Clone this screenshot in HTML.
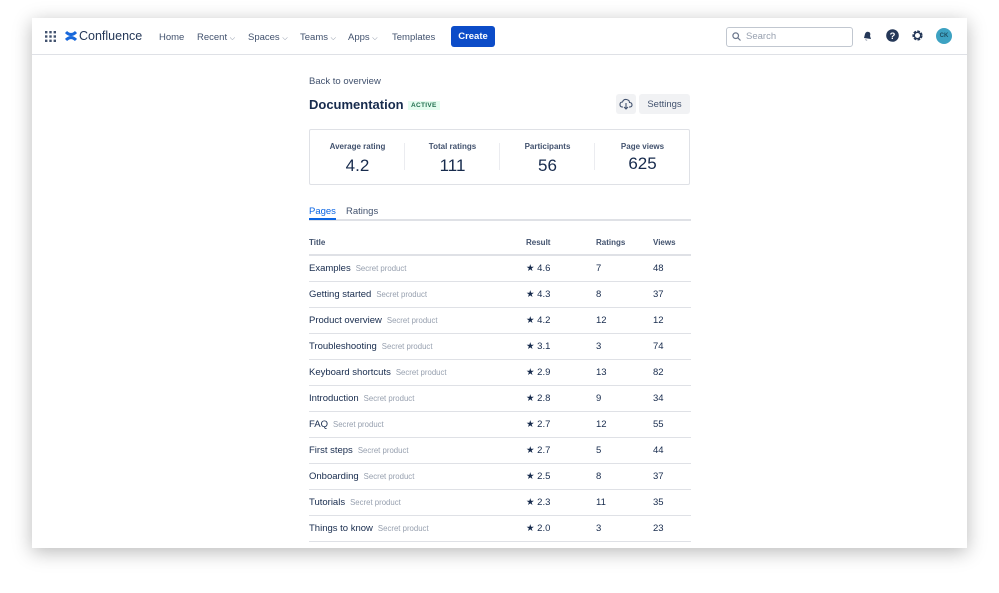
<!DOCTYPE html>
<html><head><meta charset="utf-8"><style>
body{margin:0;width:999px;height:593px;background:#fff;font-family:"Liberation Sans",sans-serif;color:#172b4d;position:relative;overflow:hidden}
.win{position:absolute;left:32px;top:18px;width:935px;height:530px;background:#fff;box-shadow:0 4px 18px rgba(0,0,0,.28);overflow:hidden}
.hdr{position:absolute;left:0;top:0;width:935px;height:36px;border-bottom:1px solid #dfe1e6}
.t{position:absolute;white-space:nowrap}
.nav{font-size:9.5px;color:#42526e;top:14px}
.chev{font-size:7px;color:#6b778c}
.c{position:absolute;text-align:center}
table{position:absolute;left:277px;top:218px;width:382px;border-collapse:collapse;font-size:9.5px}
th{font-size:8px;color:#42526e;text-align:left;font-weight:bold;height:12px;padding:0 0 6px 0;border-bottom:2px solid #dfe1e6}
td{height:25px;border-bottom:1px solid #dfe1e6;padding:0;color:#172b4d}
td small{color:#97a0af;font-size:7.8px;margin-left:5px}
</style></head><body>
<div class="win">
<div class="hdr">
<svg class="t" style="left:13px;top:13px" width="11" height="11" viewBox="0 0 11 11" fill="#42526e"><rect x="0" y="0" width="2.4" height="2.4"/><rect x="4.3" y="0" width="2.4" height="2.4"/><rect x="8.6" y="0" width="2.4" height="2.4"/><rect x="0" y="4.3" width="2.4" height="2.4"/><rect x="4.3" y="4.3" width="2.4" height="2.4"/><rect x="8.6" y="4.3" width="2.4" height="2.4"/><rect x="0" y="8.6" width="2.4" height="2.4"/><rect x="4.3" y="8.6" width="2.4" height="2.4"/><rect x="8.6" y="8.6" width="2.4" height="2.4"/></svg>
<svg class="t" style="left:33px;top:12px" width="12" height="12" viewBox="0 0 12 12"><path d="M1 2 Q6 7 11 2 M1 10 Q6 5 11 10" stroke="#1868db" stroke-width="3" fill="none"/></svg>
<div class="t" style="left:47px;top:11px;font-size:12.5px;color:#253858">Confluence</div>
<div class="t nav" style="left:127px">Home</div>
<div class="t nav" style="left:165px">Recent <span class="chev">⌵</span></div>
<div class="t nav" style="left:216px">Spaces <span class="chev">⌵</span></div>
<div class="t nav" style="left:268px">Teams <span class="chev">⌵</span></div>
<div class="t nav" style="left:316px">Apps <span class="chev">⌵</span></div>
<div class="t nav" style="left:360px">Templates</div>
<div class="t" style="left:419px;top:8px;width:44px;height:21px;background:#0c4cc8;border-radius:3px;color:#fff;font-size:9.5px;font-weight:bold;text-align:center;line-height:22px">Create</div>
<div class="t" style="left:694px;top:9px;width:125px;height:18px;border:1px solid #c1c7d0;border-radius:3px"></div>
<svg class="t" style="left:700px;top:14px" width="9" height="9" viewBox="0 0 9 9"><circle cx="3.7" cy="3.7" r="2.8" stroke="#6b778c" stroke-width="1.2" fill="none"/><path d="M5.8 5.8L8.5 8.5" stroke="#6b778c" stroke-width="1.2"/></svg>
<div class="t" style="left:714px;top:13px;font-size:9.5px;color:#97a0af">Search</div>
<svg class="t" style="left:830px;top:12px" width="11" height="11" viewBox="0 0 11 11"><path d="M2 8 L3 4 Q4 1 7 2 Q9 3 8 6 L9 9 Z M3 9.5 Q4 11 5.5 10" fill="#253858"/></svg>
<svg class="t" style="left:854px;top:11px" width="13" height="13" viewBox="0 0 13 13"><circle cx="6.5" cy="6.5" r="6.3" fill="#253858"/><text x="6.5" y="10" font-size="9.5" font-weight="bold" fill="#fff" text-anchor="middle" font-family="Liberation Sans">?</text></svg>
<svg class="t" style="left:879px;top:11px" width="13" height="13" viewBox="0 0 13 13"><circle cx="6.5" cy="6.5" r="4" stroke="#253858" stroke-width="2.2" fill="none" stroke-dasharray="2.5 1.2"/><circle cx="6.5" cy="6.5" r="3.2" stroke="#253858" stroke-width="1.4" fill="none"/></svg>
<div class="t" style="left:904px;top:10px;width:16px;height:16px;border-radius:50%;background:#3da2c2;color:#1d4f63;font-size:6px;font-weight:bold;text-align:center;line-height:16px">CK</div>
</div>

<div class="t" style="left:277px;top:58px;font-size:9.5px;color:#42526e">Back to overview</div>
<div class="t" style="left:277px;top:79px;font-size:13px;font-weight:bold;color:#172b4d">Documentation</div>
<div class="t" style="left:376px;top:83px;background:#e3fcef;color:#216e4e;font-size:6.5px;font-weight:bold;padding:1px 3px;letter-spacing:.3px">ACTIVE</div>
<div class="t" style="left:584px;top:76px;width:20px;height:20px;background:#f1f2f4;border-radius:3px"></div>
<svg class="t" style="left:587px;top:79px" width="14" height="14" viewBox="0 0 14 14"><path d="M4 10 H3.5 Q1 10 1 7.5 Q1 5 3.5 5 Q4.5 2 7.5 2.5 Q10.5 3 10.5 5.5 Q13 5.5 13 8 Q13 10 10.5 10 H10 M7 6 V12 M5 10 L7 12 L9 10" stroke="#42526e" stroke-width="1.1" fill="none"/></svg>
<div class="t" style="left:607px;top:76px;width:51px;height:20px;background:#f1f2f4;border-radius:3px;font-size:9.5px;color:#42526e;text-align:center;line-height:22px">Settings</div>

<div class="t" style="left:277px;top:111px;width:379px;height:54px;border:1.5px solid #dfe1e6;border-radius:2px"></div>
<div class="t" style="left:372px;top:125px;width:1px;height:27px;background:#ebecf0"></div>
<div class="t" style="left:467px;top:125px;width:1px;height:27px;background:#ebecf0"></div>
<div class="t" style="left:562px;top:125px;width:1px;height:27px;background:#ebecf0"></div>
<div class="c" style="left:278px;top:124px;width:95px;font-size:8px;font-weight:bold;color:#42526e">Average rating</div>
<div class="c" style="left:373px;top:124px;width:95px;font-size:8px;font-weight:bold;color:#42526e">Total ratings</div>
<div class="c" style="left:468px;top:124px;width:95px;font-size:8px;font-weight:bold;color:#42526e">Participants</div>
<div class="c" style="left:563px;top:124px;width:95px;font-size:8px;font-weight:bold;color:#42526e">Page views</div>
<div class="c" style="left:278px;top:138px;width:95px;font-size:17px;color:#172b4d">4.2</div>
<div class="c" style="left:373px;top:138px;width:95px;font-size:17px">111</div>
<div class="c" style="left:468px;top:138px;width:95px;font-size:17px">56</div>
<div class="c" style="left:563px;top:136px;width:95px;font-size:17px">625</div>

<div class="t" style="left:277px;top:188px;font-size:9.5px;color:#0c66e4">Pages</div>
<div class="t" style="left:314px;top:188px;font-size:9.5px;color:#42526e">Ratings</div>
<div class="t" style="left:277px;top:201px;width:382px;height:1.5px;background:#dfe1e6"></div>
<div class="t" style="left:277px;top:200px;width:27px;height:2px;background:#0c66e4"></div>

<table>
<tr><th style="width:217px">Title</th><th style="width:70px">Result</th><th style="width:57px">Ratings</th><th>Views</th></tr>
<tr><td>Examples<small>Secret product</small></td><td>★ 4.6</td><td>7</td><td>48</td></tr>
<tr><td>Getting started<small>Secret product</small></td><td>★ 4.3</td><td>8</td><td>37</td></tr>
<tr><td>Product overview<small>Secret product</small></td><td>★ 4.2</td><td>12</td><td>12</td></tr>
<tr><td>Troubleshooting<small>Secret product</small></td><td>★ 3.1</td><td>3</td><td>74</td></tr>
<tr><td>Keyboard shortcuts<small>Secret product</small></td><td>★ 2.9</td><td>13</td><td>82</td></tr>
<tr><td>Introduction<small>Secret product</small></td><td>★ 2.8</td><td>9</td><td>34</td></tr>
<tr><td>FAQ<small>Secret product</small></td><td>★ 2.7</td><td>12</td><td>55</td></tr>
<tr><td>First steps<small>Secret product</small></td><td>★ 2.7</td><td>5</td><td>44</td></tr>
<tr><td>Onboarding<small>Secret product</small></td><td>★ 2.5</td><td>8</td><td>37</td></tr>
<tr><td>Tutorials<small>Secret product</small></td><td>★ 2.3</td><td>11</td><td>35</td></tr>
<tr><td>Things to know<small>Secret product</small></td><td>★ 2.0</td><td>3</td><td>23</td></tr>
</table>
</div>
</body></html>
